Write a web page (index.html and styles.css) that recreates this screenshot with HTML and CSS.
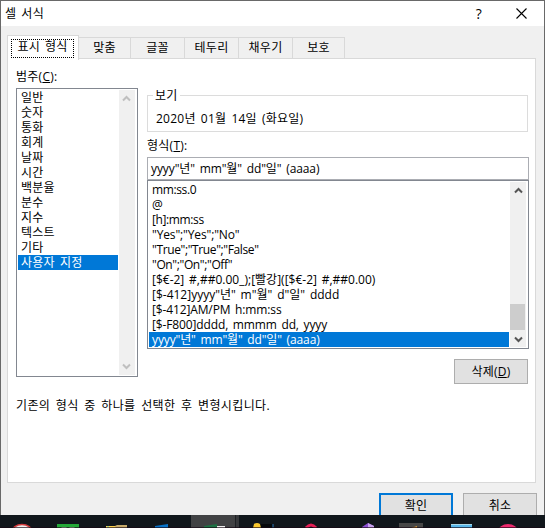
FILE: index.html
```html
<!DOCTYPE html>
<html lang="ko">
<head>
<meta charset="utf-8">
<title>셀 서식</title>
<link rel="stylesheet" href="styles.css">
</head>
<body>
<main class="dialog">
  <header class="titlebar">
    <h1>셀 서식</h1>
    <span class="help">?</span>
    <svg class="close" width="11" height="11" viewBox="0 0 11 11"><path d="M.5 .5l10 10M10.5 .5l-10 10"/></svg>
  </header>
  <nav class="tabs">
    <div class="tab active"><span>표시 형식</span></div>
    <div class="tab t2">맞춤</div>
    <div class="tab">글꼴</div>
    <div class="tab">테두리</div>
    <div class="tab">채우기</div>
    <div class="tab t6">보호</div>
  </nav>
  <section class="pane">
    <div class="columns">
      <div class="category">
        <label class="caption">범주(<u>C</u>):</label>
        <div class="list">
          <ul>
            <li>일반</li><li>숫자</li><li>통화</li><li>회계</li><li>날짜</li><li>시간</li><li>백분율</li><li>분수</li><li>지수</li><li>텍스트</li><li>기타</li><li class="selected">사용자 지정</li>
          </ul>
          <div class="scroll disabled">
            <svg width="9" height="7" viewBox="0 0 9 7"><path d="M1 5.5L4.5 2L8 5.5"/></svg>
            <svg width="9" height="7" viewBox="0 0 9 7"><path d="M1 1.5L4.5 5L8 1.5"/></svg>
          </div>
        </div>
      </div>
      <div class="format">
        <fieldset>
          <legend>보기</legend>
          <div class="sample">2020년 01월 14일 (화요일)</div>
        </fieldset>
        <label class="caption">형식(<u>T</u>):</label>
        <div class="input">yyyy"년" mm"월" dd"일" (aaaa)</div>
        <div class="list codes">
          <ul>
            <li class="tight">mm:ss.0</li><li>@</li><li class="tight">[h]:mm:ss</li><li>"Yes";"Yes";"No"</li><li class="tight">"True";"True";"False"</li><li class="tight">"On";"On";"Off"</li><li class="loose">[$€-2] #,##0.00_);[빨강]([$€-2] #,##0.00)</li><li class="loose">[$-412]yyyy"년" m"월" d"일" dddd</li><li>[$-412]AM/PM h:mm:ss</li><li>[$-F800]dddd, mmmm dd, yyyy</li><li class="selected">yyyy"년" mm"월" dd"일" (aaaa)</li>
          </ul>
          <div class="scroll">
            <svg width="9" height="7" viewBox="0 0 9 7"><path d="M1 5.5L4.5 2L8 5.5"/></svg>
            <div class="thumb"></div>
            <svg width="9" height="7" viewBox="0 0 9 7"><path d="M1 1.5L4.5 5L8 1.5"/></svg>
          </div>
        </div>
        <div class="button delete">삭제(<u>D</u>)</div>
      </div>
    </div>
    <p class="hint">기존의 형식 중 하나를 선택한 후 변형시킵니다.</p>
  </section>
  <footer class="actions">
    <div class="button primary">확인</div>
    <div class="button">취소</div>
  </footer>
</main>
<div class="taskbar">
  <svg width="545" height="13" viewBox="0 0 545 13">
    <rect x="191" width="44" height="13" fill="#414244"/><rect x="235" width="4" height="13" fill="#36383b"/><path d="M235.500 0v13" stroke="#1d2024"/>
    <ellipse cx="22" cy="17" rx="10" ry="7.500" fill="#eee" stroke="#d43a3c" stroke-width="1.500"/>
    <path d="M57 9h22v4H57z" fill="#24a938"/><path d="M61 13l1-1h4l1 1M69 13l1-1h4l1 1" fill="#d9ffd9"/>
    <path d="M106 11h9l2-1h10V13h-21z" fill="#c7ab6b"/><path d="M106 11h9l1 2h-10z" fill="#ffd34d"/><path d="M108 11v2" stroke="#55c7c0"/>
    <path d="M155 11l13-2v4h-13z" fill="#0872c7"/>
    <path d="M204 11l13-2v4h-13z" fill="#1e7245"/><path d="M217 11h8v2h-8z" fill="#eee"/>
    <path d="M260 9h13v4h-13z" fill="#05080b"/><path d="M273 9v4" stroke="#2c78b9"/><path d="M253 13l1-4q3-2 6 0l1 4z" fill="#f9c72d"/>
    <path d="M306 13q5-6 10 0" fill="none" stroke="#e51e55" stroke-width="3"/>
    <path d="M362 12l6-4 6 3v2h-12z" fill="#8b4fd2"/><path d="M368 8l6 3v2h-6z" fill="#c6a2ec"/>
    <path d="M399 8h24v5h-24z" fill="#474747"/><path d="M411 13l6-2v2z" fill="#d99937"/>
    <path d="M451 9h21v4h-21z" fill="#58b7ea"/><path d="M451 9.500h21" stroke="#a9d9e8"/>
    <ellipse cx="508" cy="17" rx="10" ry="8" fill="#ed296d"/>
    <path d="M0 12.500h545" stroke="#160713" opacity=".65"/>
  </svg>
</div>
</body>
</html>
```
FILE: styles.css
```css
* { box-sizing: border-box; }
body { margin: 0; width: 545px; height: 528px; overflow: hidden; background: #696969; font: 12px/15px "Open Sans", "Noto Sans CJK KR", sans-serif; color: #000; letter-spacing: .25px; word-spacing: 1.7px; }
ul, p, h1 { margin: 0; padding: 0; list-style: none; font: inherit; }
.dialog { margin: 1px 1px 0; width: 543px; height: 514px; background: #f0f0f0; overflow: hidden; }
.titlebar { display: flex; align-items: center; height: 25px; background: #fff; padding: 0 17px 0 4px; }
.titlebar h1 { flex: 1; margin-top: -1px; }
.help { font-size: 14px; font-weight: 500; margin: 0 34px 0 0; }
.close { stroke: #000; fill: none; stroke-width: 1.1; }
.tabs { display: flex; align-items: flex-end; height: 33px; padding-left: 6px; }
.tab { width: 54px; height: 22px; border: 1px solid #d9d9d9; border-left: 0; border-bottom: 0; text-align: center; line-height: 19px; }
.tab.t2, .tab.t6 { width: 52px; }
.tab.active { width: 72px; height: 25px; margin-bottom: -1px; background: #fff; border-left: 1px solid #d9d9d9; padding: 3px 4px 3px 3px; z-index: 1; }
.active span { display: block; height: 19px; border: 1px dotted #000; line-height: 14px; }
.pane { width: 529px; height: 425px; margin: -1px 0 0 6px; border: 1px solid #d9d9d9; background: #fff; padding: 10px 6px 0 8px; }
.columns { display: flex; gap: 9px; }
.category { width: 122px; }
.caption { display: block; line-height: 15px; height: 19px; }
.list { display: flex; border: 1px solid #828790; padding: 1px; height: 289px; }
.list ul { flex: 1; min-width: 0; margin-right: 1px; }
.list li { height: 15px; line-height: 15px; padding-left: 3px; white-space: nowrap; }
.selected { background: #0078d7; color: #fff; }
.scroll { width: 17px; display: flex; flex-direction: column; align-items: center; justify-content: space-between; padding: 5px 1px 5px 0; background: #f0f0f0; border-right: 1px solid #fff; }
.scroll svg { fill: none; stroke: #555; stroke-width: 2; }
.disabled svg { stroke: #bfbfbf; }
.format { width: 382px; }
.format fieldset { margin: 19px 1px 0 0; border: 1px solid #dcdcdc; height: 44px; padding: 0 0 0 8px; min-width: 0; }
legend { padding: 0 2px; margin-left: -3px; line-height: 15px; height: 15px; }
.sample { line-height: 15px; padding-top: 8px; }
.format .caption { margin-top: 5px; height: 20px; line-height: 17px; }
.input { height: 23px; border: 1px solid #abadb3; padding-left: 3px; line-height: 21px; letter-spacing: -.1px; }
.list.codes { height: 169px; letter-spacing: -.13px; }
.codes .tight { letter-spacing: -.38px; }
.codes .loose { letter-spacing: 0; }
.codes .scroll { padding-bottom: 4px; padding-right: 0; }
.thumb { width: 15px; height: 26px; margin: auto 1px 6px 0; background: #cdcdcd; }
.button { width: 74px; height: 25px; border: 1px solid #adadad; background: #e1e1e1; text-align: center; line-height: 23px; }
.delete { margin: 10px 0 0 307px; }
.hint { margin-top: 14px; line-height: 15px; letter-spacing: .35px; word-spacing: 2.2px; }
.actions { display: flex; justify-content: flex-end; gap: 10px; padding: 10px 7px 0 0; }
.primary { border: 2px solid #0078d7; line-height: 21px; }
.taskbar { height: 13px; background: #11171c; }
.taskbar svg { display: block; }
```
